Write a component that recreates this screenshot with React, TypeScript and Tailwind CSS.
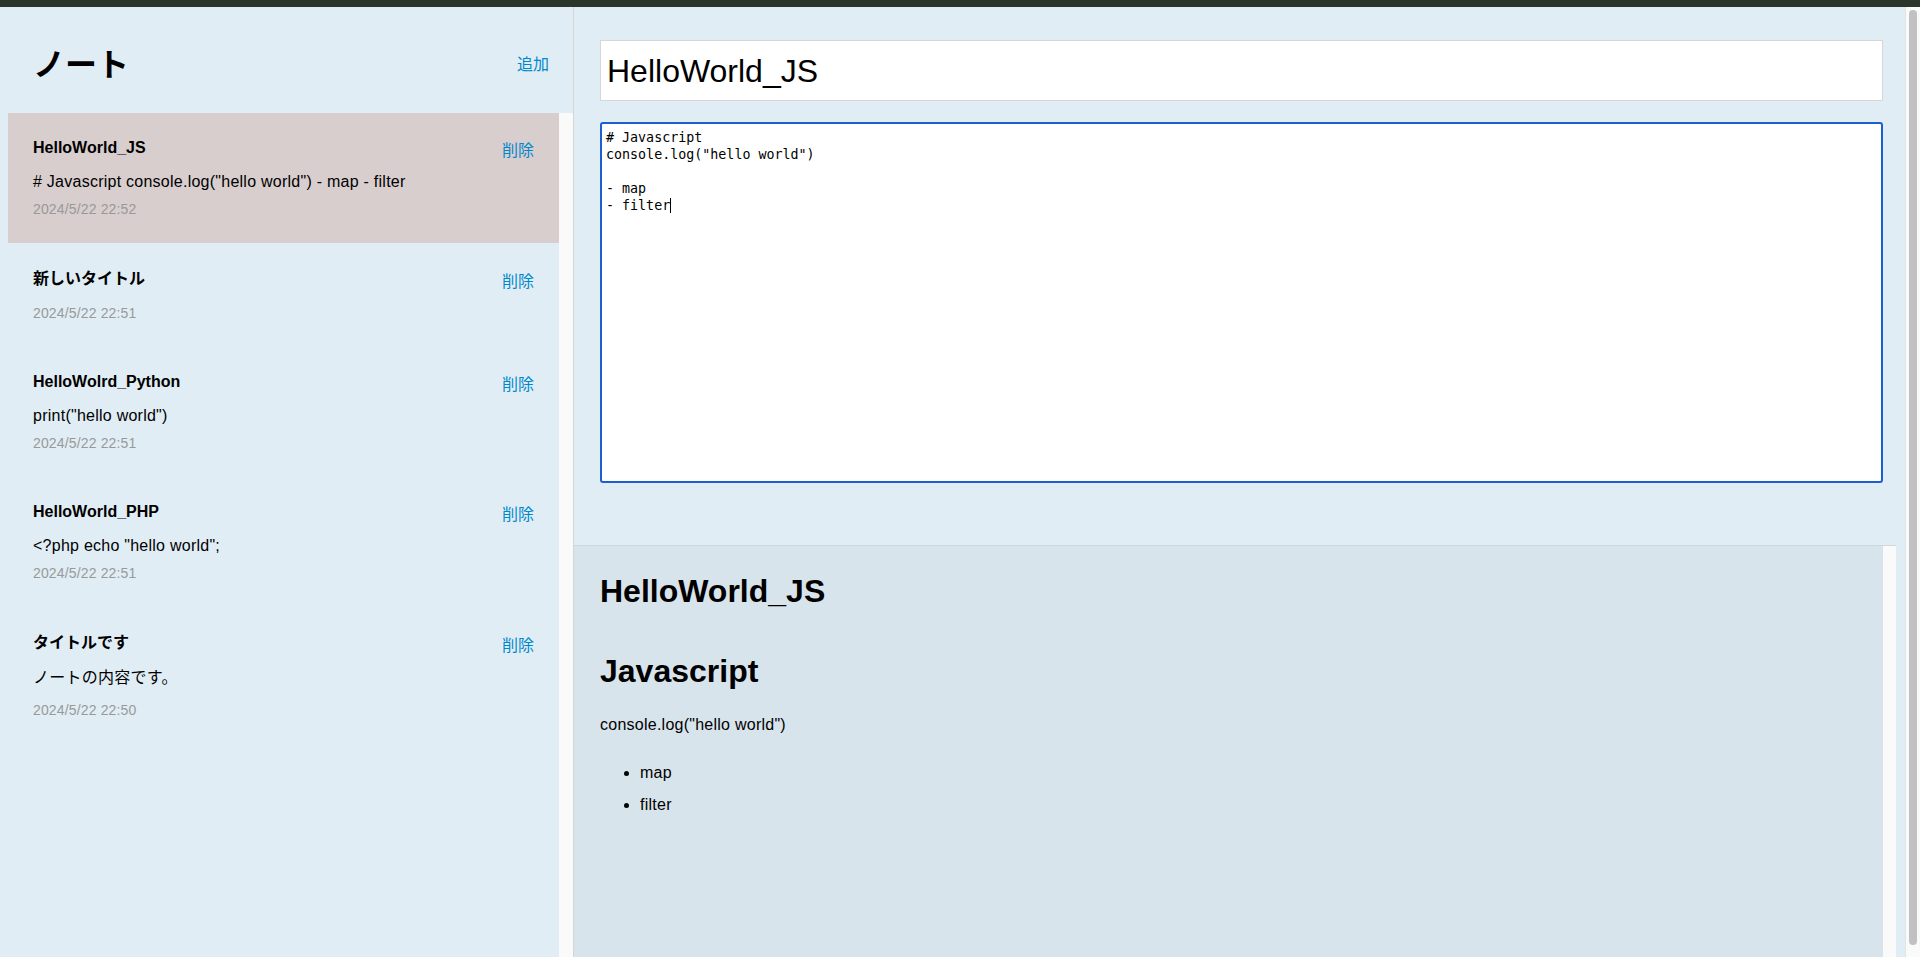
import React from "react";

const notes = [
  { title: "HelloWorld_JS", content: '# Javascript console.log("hello world") - map - filter', date: "2024/5/22 22:52", active: true, cjkTitle: false, cjkContent: false },
  { title: "新しいタイトル", content: "", date: "2024/5/22 22:51", cjkTitle: true, cjkContent: false },
  { title: "HelloWolrd_Python", content: 'print("hello world")', date: "2024/5/22 22:51", cjkTitle: false, cjkContent: false },
  { title: "HelloWorld_PHP", content: '<?php echo "hello world";', date: "2024/5/22 22:51", cjkTitle: false, cjkContent: false },
  { title: "タイトルです", content: "ノートの内容です。", date: "2024/5/22 22:50", cjkTitle: true, cjkContent: true },
];

const sans = "font-['Liberation_Sans','Noto_Sans_CJK_JP',sans-serif]";

export default function App() {
  return (
    <div className={`w-[1920px] h-[957px] flex flex-col overflow-hidden text-black ${sans}`}>
      <div className="h-[7px] shrink-0 bg-[#2c3529]" />
      <div className="flex flex-1 min-h-0 bg-[#e0edf5]">
        {/* Sidebar */}
        <aside className="w-[574px] shrink-0 border-r border-[#d4d6d8] flex flex-col pl-2">
          <div className="h-[106px] shrink-0 flex items-center justify-between pl-[25px] pr-[24px] pt-[9px]">
            <h1 className="text-[32px] font-bold leading-[38px]">ノート</h1>
            <button className="text-[16px] text-[#0088cc] leading-[20px]">追加</button>
          </div>
          <div className="flex flex-1 min-h-0">
            <div className="w-[551px] flex flex-col">
              {notes.map((n, i) => (
                <div
                  key={i}
                  className={`pt-[26px] pb-[25px] px-[25px] ${n.active ? "bg-[#d8cece]" : ""}`}
                >
                  <div className={`flex justify-between items-start ${n.cjkTitle ? "h-[26px]" : "h-[24px]"}`}>
                    <div className={`text-[16px] font-bold leading-[18px] ${n.cjkTitle ? "pt-[1px]" : ""}`}>{n.title}</div>
                    <button className={`flex items-center text-[16px] text-[#0088cc] leading-[18px] ${n.cjkTitle ? "h-[25px]" : "h-[23px]"}`}>削除</button>
                  </div>
                  {n.content && (
                    <p className="mt-[10px] text-[16px] tracking-[0.25px] leading-[18px]">{n.content}</p>
                  )}
                  <div className={`${n.cjkContent ? "mt-[15px]" : "mt-[10px]"} text-[14px] leading-[17px] tracking-[0.15px] text-[#999999]`}>{n.date}</div>
                </div>
              ))}
            </div>
            <div className="w-[14px] bg-[#fafafa]" />
          </div>
        </aside>

        {/* Main */}
        <main className="flex-1 min-w-0 flex flex-col">
          <div className="h-[538px] shrink-0 pt-[33px] pl-[26px]">
            <div className="w-[1283px] h-[61px] bg-white border border-[#d6d6d6] flex items-center pl-[6px] text-[32px] font-['Liberation_Sans',sans-serif]">
              HelloWorld_JS
            </div>
            <div className="mt-[21px] w-[1283px] h-[361px] bg-white border-2 border-[#1c5fd0] rounded-[3px] pl-[4px] pt-[5px] font-['DejaVu_Sans_Mono',monospace] text-[13.33px] leading-[17px] whitespace-pre">
              <div># Javascript</div>
              <div>console.log("hello world")</div>
              <div>{"\u00a0"}</div>
              <div>- map</div>
              <div className="flex items-center">
                <span>- filter</span>
                <span className="inline-block w-[1px] h-[15px] bg-black" />
              </div>
            </div>
          </div>
          <div className="flex-1 min-h-0 w-[1322px] border-t border-[#cfd7de] flex">
            <div className="w-[1309px] bg-[#d8e4ec] pl-[26px] pt-[26px]">
              <div className="text-[32px] font-bold leading-[38px]">HelloWorld_JS</div>
              <div className="mt-[45px] text-[32px] font-bold leading-[32px]">Javascript</div>
              <p className="mt-[22px] text-[16px] leading-[32px] tracking-[0.25px]">console.log("hello world")</p>
              <ul className="mt-[16px] pl-[40px] list-disc text-[16px] leading-[32px] tracking-[0.25px]">
                <li>map</li>
                <li>filter</li>
              </ul>
            </div>
            <div className="w-[13px] bg-[#fafafa]" />
          </div>
        </main>

        {/* Page scrollbar */}
        <div className="w-[15px] shrink-0 border-l border-[#e4e4e4] bg-[#fafafa] pt-[3px] pb-[12px]">
          <div className="ml-[3px] w-[8px] h-full rounded-full bg-[#c1c1c1]" />
        </div>
      </div>
    </div>
  );
}
